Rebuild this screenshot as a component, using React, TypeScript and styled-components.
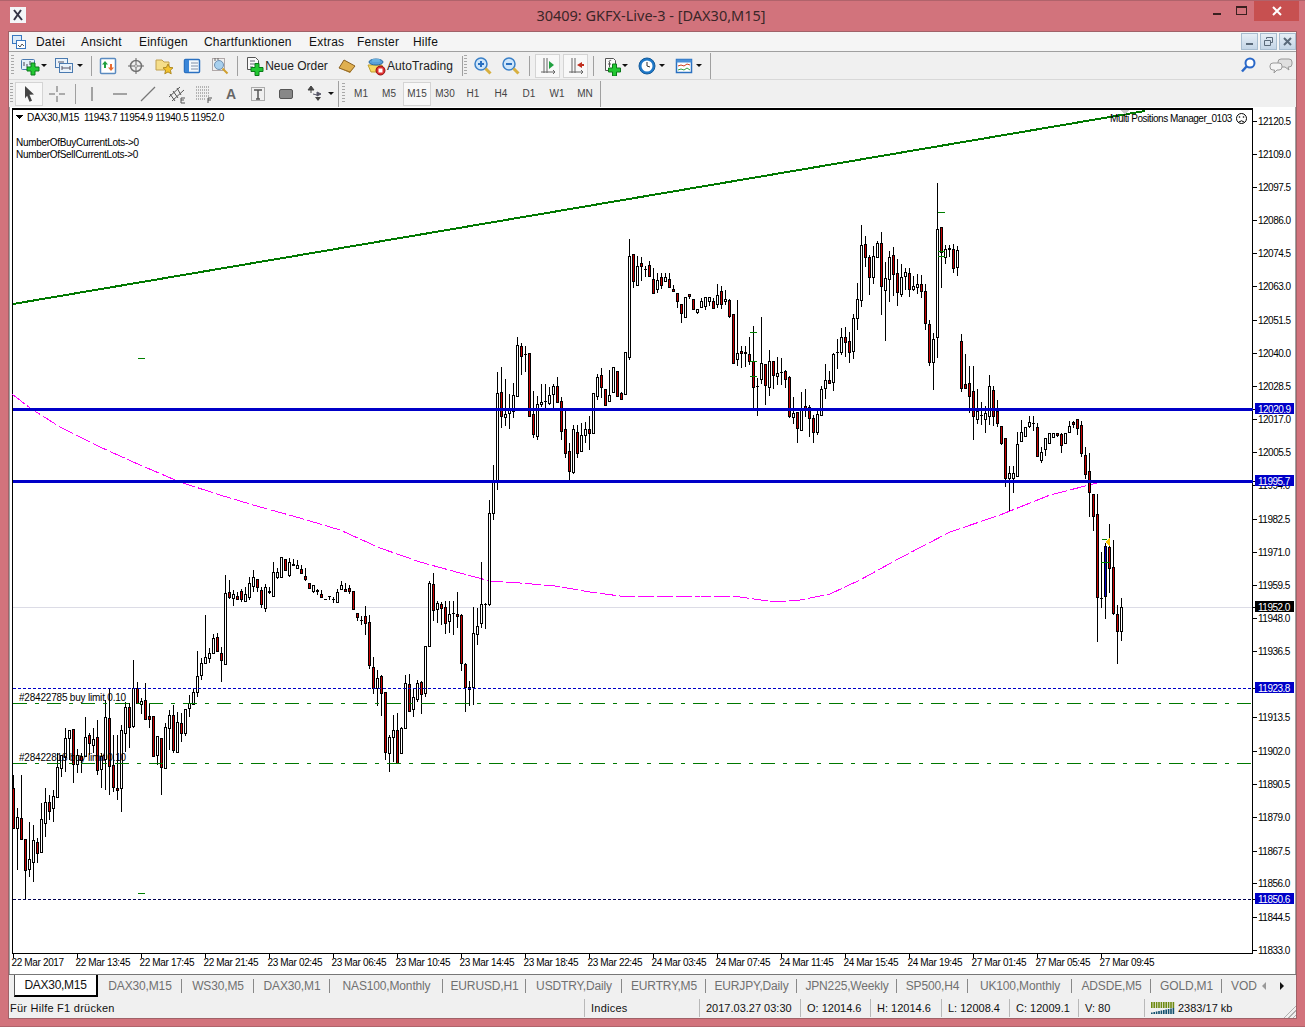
import React from "react";
import { createGlobalStyle, styled } from "styled-components";

const GlobalStyle = createGlobalStyle`
  html, body {
    margin: 0;
    padding: 0;
    overflow: hidden;
    background: #d2737c;
  }
`;

// [x, wick top, body top, body bottom, wick bottom, kind] in page pixels; kind 0 = up, 1 = down, 2 = selected
type Candle = [number, number, number, number, number, number];

const candles: Candle[] = [
  [13,775,788,828,828,1],[17,808,817,828,870,0],[21,775,818,839,840,1],[25,839,839,870,899,1],[29,822,859,869,877,0],
  [33,825,840,862,882,0],[37,838,842,853,863,1],[41,803,819,852,852,0],[45,788,802,823,837,0],[49,795,802,811,820,1],
  [53,790,796,808,822,0],[57,753,767,797,797,0],[61,755,755,768,777,0],[65,728,738,757,772,0],[69,730,730,738,760,0],
  [73,729,729,764,783,1],[77,749,755,764,773,0],[81,753,756,760,773,1],[85,717,737,756,757,0],[89,733,735,743,755,1],
  [93,728,739,745,753,0],[97,720,737,770,775,1],[101,753,756,769,788,0],[105,700,717,759,790,0],[109,688,718,766,795,1],
  [113,735,765,787,792,1],[117,735,788,790,800,1],[121,725,730,788,812,0],[125,702,707,733,752,0],[129,703,707,727,748,1],
  [133,660,688,726,728,0],[137,682,688,703,704,1],[141,698,701,704,714,0],[145,683,700,719,720,1],[149,703,716,719,728,1],
  [153,716,716,756,756,1],[157,736,736,755,765,0],[161,738,738,767,795,1],[165,723,727,768,768,0],[169,710,715,728,750,0],
  [173,705,715,750,753,1],[177,712,722,752,752,0],[181,713,723,733,742,1],[185,709,709,733,736,0],[189,695,703,708,717,0],
  [193,688,692,704,705,0],[197,651,676,692,697,0],[201,658,663,675,680,0],[205,615,657,663,663,0],[209,648,653,658,663,0],
  [213,634,638,653,653,0],[217,633,637,651,652,1],[221,647,653,660,682,1],[225,575,593,664,664,0],[229,580,592,597,599,1],
  [233,590,594,598,606,0],[237,592,596,599,599,1],[241,589,591,599,602,1],[245,587,594,601,602,0],[249,577,583,597,600,0],
  [253,570,577,586,592,0],[257,579,579,587,592,1],[261,587,590,604,608,1],[265,584,587,608,612,0],[269,587,591,592,594,1],
  [273,562,572,596,597,0],[277,568,572,577,579,0],[281,557,557,577,577,0],[285,559,559,570,571,1],[289,558,562,575,577,0],
  [293,559,564,565,566,1],[297,560,565,568,569,0],[301,565,569,573,574,1],[305,568,576,579,581,1],[309,583,583,588,588,1],
  [313,585,585,591,593,0],[317,589,590,591,595,1],[321,590,594,597,598,1],[325,599,599,599,599,1],[329,596,596,596,600,1],
  [333,597,599,599,603,1],[337,589,592,602,603,0],[341,581,585,589,590,0],[345,583,589,591,591,1],[349,585,588,591,594,1],
  [353,591,591,609,610,1],[357,613,613,617,621,1],[361,616,620,620,625,1],[365,606,616,623,635,1],[369,615,622,665,669,1],
  [373,657,667,688,694,1],[377,670,678,688,706,0],[381,675,676,693,716,1],[385,692,692,752,760,1],[389,735,737,753,772,0],
  [393,715,730,737,762,0],[397,713,730,763,764,1],[401,727,728,753,754,0],[405,675,683,728,729,0],[409,674,684,711,712,1],
  [413,688,697,709,717,0],[417,680,683,699,702,0],[421,681,682,694,714,1],[425,646,646,693,697,0],[429,581,583,646,646,0],
  [433,573,584,610,621,1],[437,601,603,609,623,0],[441,602,604,608,625,1],[445,601,607,623,634,1],[449,601,614,621,633,0],
  [453,601,613,613,635,1],[457,592,614,616,628,1],[461,614,615,663,671,1],[465,663,664,687,712,1],[469,681,687,689,706,1],
  [473,607,633,687,705,0],[477,608,626,634,645,0],[481,562,604,623,628,0],[485,603,604,604,629,1],[489,500,513,604,606,0],
  [493,465,482,513,520,0],[497,372,393,482,490,0],[501,367,392,416,428,1],[505,379,414,417,426,0],[509,394,410,413,429,0],
  [513,383,395,411,418,0],[517,337,345,396,396,0],[521,343,346,356,375,1],[525,346,354,354,372,1],[529,353,353,416,417,1],
  [533,391,414,434,438,1],[537,396,404,436,440,0],[541,384,402,404,407,0],[545,384,401,401,408,1],[549,387,395,403,405,0],
  [553,384,386,394,411,0],[557,377,386,402,403,1],[561,397,401,431,440,1],[565,410,429,453,458,1],[569,443,451,471,480,1],
  [573,425,429,472,474,0],[577,425,432,453,458,1],[581,423,435,451,451,0],[585,422,429,435,443,0],[589,416,429,433,450,1],
  [593,393,393,433,434,0],[597,374,377,396,400,0],[601,368,375,387,398,1],[605,389,389,405,405,1],[609,370,395,401,401,0],
  [613,367,367,392,392,0],[617,371,371,396,396,1],[621,392,393,399,400,1],[625,352,352,394,394,0],[629,239,256,357,360,0],
  [633,254,254,281,288,1],[637,256,266,285,285,0],[641,257,263,266,281,1],[645,266,269,269,277,1],[649,261,265,276,276,1],
  [653,268,279,293,293,1],[657,273,280,289,293,0],[661,273,277,285,289,1],[665,273,277,281,281,0],[669,273,279,287,287,1],
  [673,285,289,291,291,1],[677,293,293,301,308,1],[681,304,304,313,323,1],[685,297,297,317,317,0],[689,294,294,296,299,1],
  [693,299,299,309,309,1],[697,309,309,312,314,0],[701,298,301,307,307,0],[705,297,297,306,310,0],[709,297,297,301,306,0],
  [713,298,301,308,309,1],[717,284,295,304,308,0],[721,286,291,304,309,1],[725,290,299,301,305,0],[729,299,300,316,318,1],
  [733,314,314,363,364,1],[737,300,353,359,366,0],[741,346,351,353,368,1],[745,346,352,353,367,1],[749,337,354,361,365,1],
  [753,326,361,387,411,1],[757,378,386,386,416,1],[761,317,363,379,384,0],[765,364,364,385,405,1],[769,350,361,387,396,0],
  [773,361,361,375,389,1],[777,357,373,376,385,0],[781,358,372,372,385,1],[785,370,371,379,388,1],[789,376,377,416,418,1],
  [793,397,413,417,424,0],[797,412,412,428,443,1],[801,392,408,430,430,0],[805,389,406,408,417,1],[809,405,407,418,437,1],
  [813,415,418,432,443,1],[817,410,414,432,435,0],[821,386,389,415,415,0],[825,364,380,388,399,0],[829,371,380,383,384,1],
  [833,353,354,382,391,0],[837,339,352,352,369,1],[841,328,337,352,355,0],[845,327,337,342,357,1],[849,332,341,352,363,1],
  [853,314,318,351,359,0],[857,283,299,318,330,0],[861,225,245,300,307,0],[865,236,244,257,267,1],[869,255,257,277,295,1],
  [873,246,256,277,284,0],[877,241,243,257,257,0],[881,232,243,286,315,1],[885,262,278,290,341,0],[889,251,257,279,302,0],
  [893,247,255,274,296,1],[897,259,273,292,306,1],[901,264,277,294,297,0],[905,268,272,276,290,0],[909,268,273,289,297,1],
  [913,276,286,289,291,0],[917,274,284,287,294,0],[921,275,284,291,298,1],[925,284,291,323,330,1],[929,320,324,362,366,1],
  [933,333,339,362,390,0],[937,183,229,337,358,0],[941,227,227,252,288,1],[945,245,249,257,264,0],[949,245,248,249,257,1],
  [953,244,249,268,273,1],[957,246,250,267,276,0],[961,334,341,388,392,1],[965,354,384,388,389,1],[969,366,383,396,413,1],
  [973,366,391,416,440,1],[977,389,411,419,424,0],[981,402,415,415,425,1],[985,406,413,419,433,0],[989,375,386,416,425,0],
  [993,386,390,416,426,1],[997,400,411,423,427,1],[1001,426,426,443,445,1],[1005,438,438,478,487,1],[1009,466,473,478,511,0],
  [1013,466,473,478,493,0],[1017,432,444,476,476,0],[1021,420,432,441,441,0],[1025,427,427,436,436,0],[1029,416,422,426,428,0],
  [1033,416,423,423,431,1],[1037,423,427,456,456,1],[1041,447,452,460,463,0],[1045,438,438,449,456,0],[1049,433,433,443,443,0],
  [1053,433,433,437,437,0],[1057,433,433,435,437,1],[1061,433,434,445,453,1],[1065,433,433,443,443,0],[1069,421,426,432,432,0],
  [1073,421,422,424,428,1],[1077,419,419,428,435,1],[1081,421,425,453,457,1],[1085,447,455,474,479,1],[1089,453,471,492,517,1],
  [1093,494,494,516,531,1],[1097,494,514,597,642,1],[1101,552,598,598,608,1],[1105,543,546,596,619,2],[1109,524,547,568,593,1],
  [1113,540,567,613,615,1],[1117,605,614,631,664,1],[1121,598,607,631,641,0],
];

const prices: [string, number][] = [
  ["12120.5",121],["12109.0",154],["12097.5",187],["12086.0",220],["12074.5",253],["12063.0",286],["12051.5",320],
  ["12040.0",353],["12028.5",386],["12017.0",419],["12005.5",452],["11994.0",485],["11982.5",519],["11971.0",552],
  ["11959.5",585],["11948.0",618],["11936.5",651],["11913.5",717],["11902.0",751],["11890.5",784],
  ["11879.0",817],["11867.5",851],["11856.0",883],["11844.5",917],["11833.0",950],
];

const times = [
  "22 Mar 2017","22 Mar 13:45","22 Mar 17:45","22 Mar 21:45","23 Mar 02:45","23 Mar 06:45","23 Mar 10:45","23 Mar 14:45",
  "23 Mar 18:45","23 Mar 22:45","24 Mar 03:45","24 Mar 07:45","24 Mar 11:45","24 Mar 15:45","24 Mar 19:45","27 Mar 01:45",
  "27 Mar 05:45","27 Mar 09:45",
];

const priceTags: [string, number, string][] = [
  ["12020.9",409,"#0000c8"],["11995.7",481,"#0000c8"],["11952.0",607,"#000000"],["11923.8",688,"#0000c8"],["11850.6",899,"#0000c8"],
];

const maLine =
  "12,394 30,408 60,427 100,447 140,465 180,482 220,495 260,507 300,518 340,530 380,548 420,562 460,573 490,581 520,583 555,586 590,592 620,596 660,596 700,596 740,597 775,602 800,600 830,594 860,580 900,558 950,532 1000,515 1050,495 1105,481";

const greenTicks: [number, number, number][] = [
  [138,145,358],[138,145,893],[750,757,332],[750,757,361],[750,757,376],[938,945,212],[938,945,251],[938,945,256],[1102,1107,539],[1101,1110,562],
];

// tab label and its width up to the following separator
const tabs: [string, number][] = [
  ["DAX30,M15",84],["WS30,M5",72],["DAX30,M1",76],["NAS100,Monthly",113],["EURUSD,H1",83],["USDTRY,Daily",96],
  ["EURTRY,M5",84],["EURJPY,Daily",91],["JPN225,Weekly",100],["SP500,H4",71],["UK100,Monthly",104],["ADSDE,M5",79],["GOLD,M1",71],
];

const Window = styled.div`
  box-sizing: border-box;
  width: 1305px;
  height: 1027px;
  display: flex;
  flex-direction: column;
  padding: 0 8px 7px;
  background: #d2737c;
  border: 1px solid #b0636b;
  border-left-width: 0;
  border-right-width: 0;
  font-family: "Liberation Sans", Arial, sans-serif;
`;

const TitleBar = styled.div`
  height: 30px;
  flex: none;
  display: flex;
  align-items: flex-start;
`;

const AppBadge = styled.div`
  width: 16px;
  height: 16px;
  margin: 6px 0 0 2px;
  background: #f4f6f8;
`;

const TitleText = styled.div`
  flex: 1;
  text-align: center;
  line-height: 29px;
  font-family: "Noto Sans", sans-serif;
  font-size: 14.5px;
  color: #3a2628;
  margin-left: 70px;
`;

const CaptionButtons = styled.div`
  display: flex;
  align-items: flex-start;
  margin-right: -2px;
`;

const CaptionButton = styled.div<{ $close?: boolean; $w: number }>`
  width: ${(p) => p.$w}px;
  height: 20px;
  display: flex;
  align-items: center;
  justify-content: center;
  background: ${(p) => (p.$close ? "#c75050" : "transparent")};
`;

const Client = styled.div`
  flex: 1;
  display: flex;
  flex-direction: column;
  background: #f0f0f0;
  border: 1px solid #a06268;
  min-height: 0;
`;

const MenuBar = styled.div`
  height: 19px;
  flex: none;
  display: flex;
  align-items: center;
  border-bottom: 1px solid #a0a0a0;
  background: #f5f5f5;
`;

const MenuGlyph = styled.div`
  width: 20px;
  height: 19px;
  margin: 0 5px 0 2px;
  display: flex;
  align-items: center;
`;

const MenuItem = styled.span<{ $w: number }>`
  width: ${(p) => p.$w}px;
  font-size: 12px;
  letter-spacing: 0.2px;
  color: #111;
`;

const MdiButtons = styled.div`
  margin-left: auto;
  display: flex;
  gap: 2px;
`;

const MdiButton = styled.div`
  box-sizing: border-box;
  width: 17px;
  height: 17px;
  border: 1px solid #a8bdd0;
  background: linear-gradient(#e6eef6, #c4d5e6);
  display: flex;
  align-items: center;
  justify-content: center;
`;

const ToolRow = styled.div<{ $line?: boolean }>`
  height: 27px;
  flex: none;
  display: flex;
  align-items: center;
  border-bottom: ${(p) => (p.$line ? "1px solid #d8d8d8" : "none")};
`;

const Grip = styled.div<{ $left?: number }>`
  width: 3px;
  height: 21px;
  margin: 0 2px 0 ${(p) => p.$left ?? 2}px;
  background: repeating-linear-gradient(#a8a8a8 0 1px, transparent 1px 3px);
`;

const Sep = styled.div<{ $h?: number; $m?: string }>`
  width: 1px;
  height: ${(p) => p.$h ?? 20}px;
  margin: ${(p) => p.$m ?? "0 3px"};
  background: #a0a0a0;
`;

const ToolButton = styled.div<{ $w?: number; $active?: boolean; $gap?: number; $ml?: number }>`
  box-sizing: border-box;
  width: ${(p) => p.$w ?? 28}px;
  height: 24px;
  flex: none;
  display: flex;
  align-items: center;
  justify-content: center;
  gap: ${(p) => p.$gap ?? 3}px;
  margin-left: ${(p) => p.$ml ?? 0}px;
  font-size: 12px;
  color: #222;
  white-space: nowrap;
  background: ${(p) => (p.$active ? "#f8f8f8" : "transparent")};
  border: 1px solid ${(p) => (p.$active ? "#d4d4d4" : "transparent")};
`;

const PeriodButton = styled(ToolButton)`
  font-size: 10px;
  color: #444;
`;

const LetterButton = styled(ToolButton)`
  font-size: 14px;
  font-weight: 700;
  color: #666;
`;

const Label = styled.span<{ $spacing?: number }>`
  letter-spacing: ${(p) => p.$spacing ?? 0}px;
`;

const Caret = styled.span`
  width: 0;
  height: 0;
  border-left: 3px solid transparent;
  border-right: 3px solid transparent;
  border-top: 3px solid #111;
`;

const RowEnd = styled.div`
  margin-left: auto;
  display: flex;
  align-items: center;
  gap: 11px;
  margin-right: 3px;
`;

const ChartFrame = styled.svg`
  display: block;
  flex: none;
  width: 1287px;
  height: 867px;
  background: #fff;
  shape-rendering: crispEdges;

  text {
    font-family: "Liberation Sans", Arial, sans-serif;
    font-size: 10px;
    fill: #000;
    text-rendering: optimizeSpeed;
  }
`;

const TabBar = styled.div`
  height: 22px;
  flex: none;
  display: flex;
  align-items: stretch;
  border-top: 1px solid #777;
  background: #f0f0f0;
  overflow: hidden;
  padding-left: 5px;
  position: relative;
`;

const ActiveTab = styled.div`
  box-sizing: border-box;
  width: 84px;
  margin-top: -1px;
  background: #fff;
  border: 1px solid #000;
  border-top-color: #777;
  border-left-color: #555;
  border-bottom-width: 2px;
  border-right-width: 2px;
  display: flex;
  align-items: center;
  justify-content: center;
  font-size: 12px;
  letter-spacing: -0.3px;
  color: #111;
`;

const Tab = styled.div<{ $w: number }>`
  box-sizing: border-box;
  width: ${(p) => p.$w}px;
  flex: none;
  display: flex;
  align-items: center;
  justify-content: center;
  font-size: 12px;
  letter-spacing: -0.15px;
  color: #707070;
  position: relative;

  &::after {
    content: "";
    position: absolute;
    right: 0;
    top: 4px;
    bottom: 4px;
    width: 1px;
    background: #888;
  }
`;

const TabScroll = styled.div`
  position: absolute;
  right: 0;
  top: 0;
  bottom: 0;
  width: 65px;
  display: flex;
  align-items: center;
  font-size: 12px;
  color: #707070;
  background: #f0f0f0;
`;

const ScrollArrow = styled.span<{ $right?: boolean }>`
  width: 0;
  height: 0;
  border-top: 4px solid transparent;
  border-bottom: 4px solid transparent;
  ${(p) =>
    p.$right
      ? `border-left: 4px solid #111; margin-left: 14px;`
      : `border-right: 4px solid #999; margin-left: 5px;`}
`;

const StatusBar = styled.div`
  height: 21px;
  flex: none;
  display: flex;
  align-items: center;
  font-size: 11px;
  color: #111;
  position: relative;
`;

const StatusCell = styled.div<{ $w: number; $spaced?: boolean }>`
  box-sizing: border-box;
  width: ${(p) => p.$w}px;
  height: 18px;
  flex: none;
  display: flex;
  align-items: center;
  gap: 3px;
  padding-left: 6px;
  border-left: 1px solid #b8b8b8;
  letter-spacing: ${(p) => (p.$spaced ? 0.25 : 0)}px;
  white-space: nowrap;
`;

const HelpText = styled(StatusCell)`
  border-left: none;
  padding-left: 1px;
`;

const ResizeGrip = styled.div`
  position: absolute;
  right: 0;
  bottom: 0;
  width: 14px;
  height: 14px;
  background: repeating-linear-gradient(135deg, transparent 0 2px, #b0b0b0 2px 3px);
  clip-path: polygon(100% 0, 100% 100%, 0 100%);
`;

const IconSvg = styled.svg`
  flex: none;
  display: block;
`;

const Icon = ({ children, w = 20, h = 20 }: { children: React.ReactNode; w?: number; h?: number }) => (
  <IconSvg width={w} height={h} viewBox={`0 0 ${w} ${h}`}>
    {children}
  </IconSvg>
);

const GreenPlus = ({ x, y, s = 1 }: { x: number; y: number; s?: number }) => (
  <path
    d={`M${x - 2 * s} ${y - 6 * s}h${4 * s}v${4 * s}h${4 * s}v${4 * s}h${-4 * s}v${4 * s}h${-4 * s}v${-4 * s}h${-4 * s}v${-4 * s}h${4 * s}z`}
    fill="#22c832"
    stroke="#0a7a1a"
  />
);

const NewChartIcon = () => (
  <Icon>
    <rect x="1.5" y="3.5" width="13" height="10" rx="1" fill="#e6f0fa" stroke="#4a7ab0" />
    <path d="M4 6v4M7 8v3M10 5v4" stroke="#445" />
    <GreenPlus x={13} y={13} />
  </Icon>
);

const ProfilesIcon = () => (
  <Icon>
    <rect x="1.5" y="2.5" width="12" height="9" fill="#eaf2fa" stroke="#4a7ab0" />
    <rect x="5.5" y="7.5" width="13" height="9" fill="#eaf2fa" stroke="#4a7ab0" />
    <path d="M8 12h8M4 6h6" stroke="#556" />
    <path d="M8 10v4M16 10v4" stroke="#556" />
  </Icon>
);

const MarketIcon = () => (
  <Icon>
    <rect x="2.5" y="2.5" width="15" height="15" rx="1" fill="#fff" stroke="#5a8ac0" strokeWidth="1.5" />
    <path d="M7 5l3 3.5H8V12H6V8.5H4z" fill="#20a040" />
    <path d="M13 15l-3-3.5h2V8h2v3.5h2z" fill="#e86a30" />
  </Icon>
);

const NavIcon = () => (
  <Icon>
    <circle cx="10" cy="10" r="5.5" fill="none" stroke="#777" strokeWidth="1.5" />
    <path d="M10 2v16M2 10h16" stroke="#666" />
    <circle cx="10" cy="10" r="1.5" fill="#ddd" stroke="#999" />
  </Icon>
);

const FolderIcon = () => (
  <Icon>
    <path d="M2 4h6l2 2h5v8H2z" fill="#f5de8a" stroke="#c0a050" />
    <path d="M14 8l1.6 3.4 3.4.4-2.6 2.4.8 3.6-3.2-1.9-3.2 1.9.8-3.6L9 11.8l3.4-.4z" fill="#f4c430" stroke="#b08a20" />
  </Icon>
);

const TerminalIcon = () => (
  <Icon>
    <rect x="2.5" y="3.5" width="15" height="13" rx="1" fill="#f4f8fc" stroke="#2a70c0" strokeWidth="1.5" />
    <rect x="3" y="4" width="4" height="12" fill="#3a86d8" />
    <path d="M9 7h7M9 10h7M9 13h7" stroke="#8090a8" />
  </Icon>
);

const TesterIcon = () => (
  <Icon>
    <rect x="2.5" y="2.5" width="12" height="12" fill="#f0f0f0" stroke="#b0a8a8" />
    <circle cx="9" cy="9" r="4.5" fill="#a8d0ee" stroke="#7090b0" />
    <path d="M12.5 12.5l5 5" stroke="#d0a030" strokeWidth="2" />
    <path d="M5 2v3M8 2v2" stroke="#666" />
  </Icon>
);

const OrderIcon = () => (
  <Icon>
    <path d="M3.5 1.5h8l3 3v9h-11z" fill="#fafafa" stroke="#555" />
    <path d="M6 5h5M6 8h6M6 11h3" stroke="#667" />
    <GreenPlus x={13} y={13.5} />
  </Icon>
);

const GoldIcon = () => (
  <Icon>
    <path d="M2 12L7 4l11 6-5 6z" fill="#e0b050" stroke="#8a6020" />
    <path d="M2 12l11 5 5-7-5 6z" fill="#a87828" />
  </Icon>
);

const AutoIcon = () => (
  <Icon>
    <path d="M2 9h14l2 7H5z" fill="#f6d860" stroke="#c0a030" />
    <ellipse cx="10" cy="6" rx="7" ry="3" fill="#5aa0d8" stroke="#2a6aa0" />
    <rect x="6" y="3" width="8" height="3" rx="1" fill="#6ab0e0" />
    <circle cx="14.5" cy="14.5" r="4.5" fill="#e03030" stroke="#901010" />
    <rect x="12.5" y="12.5" width="4" height="4" fill="#fff" />
  </Icon>
);

const ZoomIcon = ({ plus }: { plus?: boolean }) => (
  <Icon>
    <circle cx="8" cy="8" r="6" fill="#cfe6fa" stroke="#3a80c8" strokeWidth="1.5" />
    <path d="M5 8h6" stroke="#2a70c0" strokeWidth="2" />
    {plus && <path d="M8 5v6" stroke="#2a70c0" strokeWidth="2" />}
    <path d="M12.5 12.5l5 5" stroke="#d8b040" strokeWidth="3" />
  </Icon>
);

const AxisIcon = ({ children }: { children: React.ReactNode }) => (
  <Icon>
    <path d="M6 2v15M3 16h14M9 2v15" stroke="#666" />
    <path d="M15 14l2 2-2 2" fill="none" stroke="#666" />
    {children}
  </Icon>
);

const IndicatorIcon = () => (
  <Icon>
    <path d="M3.5 2.5h8l2 2v10h-10z" fill="#fafafa" stroke="#555" />
    <path d="M7 6c0-2 2-2 2-1M6 8h3M7.5 6v5" stroke="#555" fill="none" />
    <GreenPlus x={12.5} y={14} />
  </Icon>
);

const ClockIcon = () => (
  <Icon>
    <circle cx="10" cy="10" r="8" fill="#1e78c8" stroke="#135a9a" />
    <circle cx="10" cy="10" r="5.5" fill="#fff" />
    <path d="M10 6v4l3 1" stroke="#333" fill="none" />
  </Icon>
);

const TemplateIcon = () => (
  <Icon>
    <rect x="2.5" y="3.5" width="15" height="13" fill="#fff" stroke="#2a70c0" strokeWidth="1.5" />
    <rect x="2.5" y="3.5" width="15" height="3" fill="#4a90d8" />
    <path d="M4 10l3-1 3 1 3-2 3 1" stroke="#d04020" fill="none" />
    <path d="M4 14l3-1 3 1 3-2 3 2" stroke="#30a040" fill="none" />
  </Icon>
);

const CursorIcon = () => (
  <Icon>
    <path d="M6 2l9 8.5-4.5.2 2.5 6-2.5 1-2.4-6L6 14.5z" fill="#444" />
  </Icon>
);

const CrosshairIcon = () => (
  <Icon>
    <path d="M2 10h6M12 10h6M10 2v6M10 12v6" stroke="#666" />
  </Icon>
);

const VLineIcon = () => (
  <Icon>
    <path d="M10 3v14" stroke="#555" />
  </Icon>
);

const HLineIcon = () => (
  <Icon>
    <path d="M3 10h14" stroke="#555" />
  </Icon>
);

const TrendIcon = () => (
  <Icon>
    <path d="M3 17L17 3" stroke="#777" strokeWidth="1.2" />
  </Icon>
);

const ChannelIcon = () => (
  <Icon>
    <path d="M3 13L14 3M6 17L18 6M4 10l5 7M7 7l5 7M11 4l4 7" stroke="#555" fill="none" />
    <path d="M15 14h4M15 14v5M15 16h3M15 19h4" stroke="#555" />
  </Icon>
);

const FiboIcon = () => (
  <Icon>
    <path d="M2 3h14M2 6h14M2 9h14M2 12h14M2 15h10" stroke="#777" strokeDasharray="1 1" />
    <path d="M14 14h4M14 14v5M14 16h3" stroke="#555" />
  </Icon>
);

const TextBoxIcon = () => (
  <Icon>
    <rect x="3.5" y="3.5" width="13" height="13" fill="none" stroke="#666" strokeDasharray="1 1" />
    <path d="M6 6h8M10 6v9M8 15h4" stroke="#555" strokeWidth="1.5" />
  </Icon>
);

const RectIcon = () => (
  <Icon>
    <rect x="3.5" y="5.5" width="13" height="9" rx="1.5" fill="#888" stroke="#555" />
  </Icon>
);

const ArrowsIcon = () => (
  <Icon>
    <path d="M6 2l3 4H3zM6 6v3" fill="#444" stroke="#444" />
    <path d="M13 17l-3-4h6z" fill="#444" />
    <path d="M8 10l4 1M12 8l4 2-4 2z" fill="#556" stroke="#556" />
  </Icon>
);

const SearchIcon = () => (
  <Icon>
    <circle cx="12" cy="7" r="4.5" fill="#fff" stroke="#2a68c8" strokeWidth="2" />
    <path d="M8.5 10.5L4 15.5" stroke="#2a68c8" strokeWidth="2.5" />
  </Icon>
);

const BubblesIcon = () => (
  <Icon w={24} h={20}>
    <path d="M12 3h8a3 3 0 013 3v2a3 3 0 01-3 3h-1l1 3-4-3h-4a3 3 0 01-3-3V6a3 3 0 013-3z" fill="#e0e0e0" stroke="#999" />
    <path d="M4 7h6a3 3 0 013 3v1a3 3 0 01-3 3H8l-3 3 .5-3H4a3 3 0 01-3-3v-1a3 3 0 013-3z" fill="#f4f4f4" stroke="#999" />
  </Icon>
);

const LedBars = () => (
  <Icon w={24} h={14}>
    {[0, 1, 2, 3, 4, 5, 6, 7, 8, 9].map((i) => (
      <React.Fragment key={i}>
        <rect x={i * 2.4} y={1} width="1.6" height={6} fill="#6e8a10" />
        <rect x={i * 2.4} y={7 + (9 - i) * 0.5} width="1.6" height={6 - (9 - i) * 0.5} fill="#12506e" />
      </React.Fragment>
    ))}
  </Icon>
);

const CandleBar = ({ c }: { c: Candle }) => {
  const [x, wickTop, bodyTop, bodyBot, wickBot, kind] = c;
  const fill = kind === 1 ? "#c80000" : kind === 2 ? "#0000c8" : "#fff";
  return (
    <g>
      <rect x={x} y={wickTop} width="1" height={Math.max(1, wickBot - wickTop)} fill="#000" />
      {bodyBot - bodyTop <= 1 ? (
        <rect x={x - 1} y={bodyTop} width="3" height={bodyBot - bodyTop + 1} fill="#000" />
      ) : (
        <rect x={x - 0.5} y={bodyTop + 0.5} width="2" height={bodyBot - bodyTop} fill={fill} stroke="#000" />
      )}
    </g>
  );
};

const PriceChart = () => (
  <ChartFrame viewBox="9 107 1287 867">
    <rect x="1295" y="107" width="1" height="867" fill="#a0a0a0" />
    <rect x="9" y="107" width="1" height="867" fill="#a0a0a0" />

    <rect x="12" y="108" width="1241" height="2" fill="#000" />
    <rect x="12" y="109" width="1" height="845" fill="#000" />
    <rect x="1252" y="109" width="1" height="845" fill="#000" />
    <rect x="12" y="953" width="1241" height="1" fill="#000" />

    <line x1="13" y1="607.5" x2="1252" y2="607.5" stroke="#dcdce6" />
    <polyline points={maLine} fill="none" stroke="#ff00ff" strokeDasharray="16 3" />

    {candles.map((c) => (
      <CandleBar key={c[0]} c={c} />
    ))}

    <line x1="13" y1="304" x2="1145" y2="111" stroke="#007800" strokeWidth="2" />
    <line x1="13" y1="703.5" x2="1252" y2="703.5" stroke="#007800" strokeDasharray="14 8 4 8" />
    <line x1="13" y1="763.5" x2="1252" y2="763.5" stroke="#007800" strokeDasharray="14 8 4 8" />
    <line x1="13" y1="688.5" x2="1252" y2="688.5" stroke="#0000c8" strokeDasharray="3 2" />
    <line x1="13" y1="899.5" x2="1252" y2="899.5" stroke="#000050" strokeDasharray="3 2" />
    <rect x="13" y="408" width="1240" height="3" fill="#0000c8" />
    <rect x="13" y="480" width="1240" height="3" fill="#0000c8" />
    {greenTicks.map(([x1, x2, y]) => (
      <line key={`${x1}-${y}`} x1={x1} y1={y + 0.5} x2={x2} y2={y + 0.5} stroke="#008000" />
    ))}
    <polygon points="1110,538 1110,546 1105,542" fill="#ffc800" />
    <polygon points="1120,110 1130,110 1125,114" fill="#c8c8c8" />

    {prices.map(([label, y]) => (
      <g key={label}>
        <rect x="1253" y={y} width="4" height="1" fill="#000" />
        <text x="1258" y={y + 4} letterSpacing="-0.5">{label}</text>
      </g>
    ))}
    {priceTags.map(([label, y, color]) => (
      <g key={label}>
        <rect x="1253" y={y} width="3" height="1" fill="#000" />
        <rect x="1255" y={y - 6} width="39" height="11" fill={color} />
        <text x="1258" y={y + 3.5} letterSpacing="-0.5" fill="#fff" style={{ fill: "#fff" }}>{label}</text>
      </g>
    ))}

    {times.map((label, i) => (
      <g key={label}>
        <rect x={13 + i * 64} y="954" width="1" height="4" fill="#000" />
        <text x={11.5 + i * 64} y="966" letterSpacing="-0.35">{label}</text>
      </g>
    ))}

    <polygon points="16,115 23,115 19.5,119" fill="#000" />
    <text x="27" y="121" letterSpacing="-0.2">DAX30,M15</text>
    <text x="84" y="121" letterSpacing="-0.32">11943.7 11954.9 11940.5 11952.0</text>
    <text x="16" y="146" letterSpacing="-0.3">NumberOfBuyCurrentLots-&gt;0</text>
    <text x="16" y="158" letterSpacing="-0.3">NumberOfSellCurrentLots-&gt;0</text>
    <text x="1110" y="122" letterSpacing="-0.45">Multi Positions Manager_0103</text>
    <g shapeRendering="auto">
      <circle cx="1241.5" cy="118.5" r="5" fill="#fff" stroke="#000" />
      <circle cx="1239.5" cy="117" r="0.8" fill="#000" />
      <circle cx="1243.5" cy="117" r="0.8" fill="#000" />
      <path d="M1239 122q2.5-2.5 5 0" fill="none" stroke="#000" />
    </g>
    <text x="19" y="701" letterSpacing="-0.2">#28422785 buy limit 0.10</text>
    <text x="19" y="761" letterSpacing="-0.2">#28422818 buy limit 0.10</text>
  </ChartFrame>
);

export default function App() {
  return (
    <>
      <GlobalStyle />
      <Window>
        <TitleBar>
          <AppBadge>
            <Icon w={16} h={16}>
              <path d="M4 3l8 10M11 3l-7 10" stroke="#334" strokeWidth="2" />
            </Icon>
          </AppBadge>
          <TitleText>30409: GKFX-Live-3 - [DAX30,M15]</TitleText>
          <CaptionButtons>
            <CaptionButton $w={24}>
              <Icon w={10} h={10}>
                <rect x="0" y="7" width="8" height="2" fill="#3a2020" />
              </Icon>
            </CaptionButton>
            <CaptionButton $w={24}>
              <Icon w={14} h={12}>
                <rect x="1.5" y="1.5" width="10" height="8" fill="none" stroke="#3a2020" />
                <rect x="1" y="1" width="11" height="2" fill="#3a2020" />
              </Icon>
            </CaptionButton>
            <CaptionButton $w={45} $close>
              <Icon w={12} h={12}>
                <path d="M2 2l8 8M10 2l-8 8" stroke="#fff" strokeWidth="2" />
              </Icon>
            </CaptionButton>
          </CaptionButtons>
        </TitleBar>
        <Client>
          <MenuBar>
            <MenuGlyph>
              <Icon w={16} h={16}>
                <rect x="1.5" y="1.5" width="9" height="8" fill="#dcebf8" stroke="#3a78c0" />
                <rect x="5.5" y="6.5" width="9" height="8" fill="#fff" stroke="#3a78c0" />
                <path d="M7 11l2 2 2-3 2 2" stroke="#555" fill="none" />
              </Icon>
            </MenuGlyph>
            <MenuItem $w={45}>Datei</MenuItem>
            <MenuItem $w={58}>Ansicht</MenuItem>
            <MenuItem $w={65}>Einfügen</MenuItem>
            <MenuItem $w={105}>Chartfunktionen</MenuItem>
            <MenuItem $w={48}>Extras</MenuItem>
            <MenuItem $w={56}>Fenster</MenuItem>
            <MenuItem $w={30}>Hilfe</MenuItem>
            <MdiButtons>
              <MdiButton>
                <Icon w={9} h={9}>
                  <rect x="1" y="6" width="7" height="2" fill="#5a6a7a" />
                </Icon>
              </MdiButton>
              <MdiButton>
                <Icon w={11} h={11}>
                  <path d="M3.5 3V1.5h6v5H8M1.5 4.5h6v5h-6z" fill="none" stroke="#5a6a7a" />
                </Icon>
              </MdiButton>
              <MdiButton>
                <Icon w={11} h={11}>
                  <path d="M2 2l7 7M9 2l-7 7" stroke="#5a6a7a" strokeWidth="2" />
                </Icon>
              </MdiButton>
            </MdiButtons>
          </MenuBar>
          <ToolRow $line>
            <Grip />
            <ToolButton $w={34} $gap={1}><NewChartIcon /><Caret /></ToolButton>
            <ToolButton $w={36}><ProfilesIcon /><Caret /></ToolButton>
            <Sep $m="0 2px 0 5px" />
            <ToolButton><MarketIcon /></ToolButton>
            <ToolButton><NavIcon /></ToolButton>
            <ToolButton><FolderIcon /></ToolButton>
            <ToolButton><TerminalIcon /></ToolButton>
            <ToolButton><TesterIcon /></ToolButton>
            <Sep $m="0 2px 0 3px" />
            <ToolButton $w={92} $gap={1}><OrderIcon /><Label>Neue Order</Label></ToolButton>
            <ToolButton $w={29}><GoldIcon /></ToolButton>
            <ToolButton $w={97} $gap={1}><AutoIcon /><Label $spacing={0.1}>AutoTrading</Label></ToolButton>
            <Sep $m="0 0 0 4px" />
            <Grip $left={1} />
            <ToolButton><ZoomIcon plus /></ToolButton>
            <ToolButton><ZoomIcon /></ToolButton>
            <Sep $m="0 5px 0 4px" />
            <ToolButton $w={25} $active><AxisIcon><path d="M11 5l5 4-5 4z" fill="#20a040" /></AxisIcon></ToolButton>
            <ToolButton $w={25} $active $ml={3}><AxisIcon><path d="M11 9l5-3v2h2v2h-2v2z" fill="#c03020" /></AxisIcon></ToolButton>
            <Sep $m="0 3px 0 5px" />
            <ToolButton $w={36} $gap={0}><IndicatorIcon /><Caret /></ToolButton>
            <ToolButton $w={36} $gap={2}><ClockIcon /><Caret /></ToolButton>
            <ToolButton $w={38} $gap={2}><TemplateIcon /><Caret /></ToolButton>
            <Sep $h={26} $m="0 0 0 3px" />
            <RowEnd>
              <SearchIcon />
              <BubblesIcon />
            </RowEnd>
          </ToolRow>
          <ToolRow>
            <Grip $left={1} />
            <ToolButton $active><CursorIcon /></ToolButton>
            <ToolButton><CrosshairIcon /></ToolButton>
            <Sep $m="0 2px 0 4px" />
            <ToolButton><VLineIcon /></ToolButton>
            <ToolButton><HLineIcon /></ToolButton>
            <ToolButton><TrendIcon /></ToolButton>
            <ToolButton><ChannelIcon /></ToolButton>
            <ToolButton><FiboIcon /></ToolButton>
            <LetterButton $w={26}>A</LetterButton>
            <ToolButton><TextBoxIcon /></ToolButton>
            <ToolButton><RectIcon /></ToolButton>
            <ToolButton $w={38}><ArrowsIcon /><Caret /></ToolButton>
            <Sep $h={26} $m="0 3px 0 0" />
            <Grip $left={0} />
            <PeriodButton>M1</PeriodButton>
            <PeriodButton>M5</PeriodButton>
            <PeriodButton $active>M15</PeriodButton>
            <PeriodButton>M30</PeriodButton>
            <PeriodButton>H1</PeriodButton>
            <PeriodButton>H4</PeriodButton>
            <PeriodButton>D1</PeriodButton>
            <PeriodButton>W1</PeriodButton>
            <PeriodButton>MN</PeriodButton>
            <Sep $h={26} $m="0 0 0 1px" />
          </ToolRow>
          <PriceChart />
          <TabBar>
            <ActiveTab>DAX30,M15</ActiveTab>
            {tabs.map(([label, width], i) => (
              <Tab key={`${label}-${i}`} $w={width}>
                {label}
              </Tab>
            ))}
            <TabScroll>
              VOD
              <ScrollArrow />
              <ScrollArrow $right />
            </TabScroll>
          </TabBar>
          <StatusBar>
            <HelpText $w={575} $spaced>Für Hilfe F1 drücken</HelpText>
            <StatusCell $w={115} $spaced>Indices</StatusCell>
            <StatusCell $w={101}>2017.03.27 03:30</StatusCell>
            <StatusCell $w={70}>O: 12014.6</StatusCell>
            <StatusCell $w={71}>H: 12014.6</StatusCell>
            <StatusCell $w={68}>L: 12008.4</StatusCell>
            <StatusCell $w={69}>C: 12009.1</StatusCell>
            <StatusCell $w={66}>V: 80</StatusCell>
            <StatusCell $w={140}><LedBars />2383/17 kb</StatusCell>
            <ResizeGrip />
          </StatusBar>
        </Client>
      </Window>
    </>
  );
}
